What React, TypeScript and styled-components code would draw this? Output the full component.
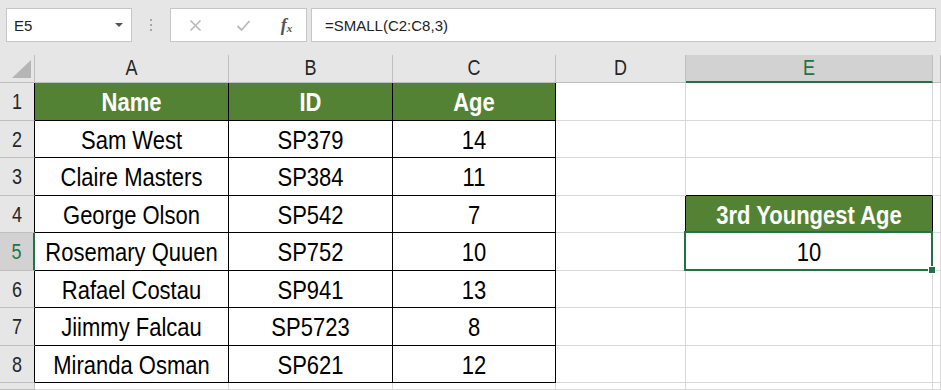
import React from "react";
import styled, { createGlobalStyle } from "styled-components";

const GRID = "#d9d9d9";
const HEAD_LINE = "#bfbfbf";
const HEAD_BG = "#e6e6e6";
const HEAD_SEL = "#d2d2d2";
const XL_GREEN = "#217346";
const FILL_GREEN = "#548235";
const INK = "#000";

const GlobalStyle = createGlobalStyle`
  html, body {
    margin: 0;
    padding: 0;
    background: #fff;
  }
  body {
    font-family: "Liberation Sans", Arial, sans-serif;
  }
`;

const Page = styled.div`
  width: 941px;
  height: 390px;
  overflow: hidden;
  display: flex;
  flex-direction: column;
`;

const Toolbar = styled.div`
  flex: 0 0 55px;
  display: flex;
  align-items: flex-start;
  padding: 8px 5px 0 6px;
  box-sizing: border-box;
  background: ${HEAD_BG};
`;

const Box = styled.div`
  height: 34px;
  box-sizing: border-box;
  background: #fff;
  border: 1px solid #c6c6c6;
  display: flex;
  align-items: center;
`;

const NameBox = styled(Box)`
  width: 126px;
  padding: 0 8px 0 7px;
  justify-content: space-between;
  font-size: 15px;
  color: #222;
`;

const DropArrow = styled.span`
  width: 0;
  height: 0;
  border-left: 4px solid transparent;
  border-right: 4px solid transparent;
  border-top: 4px solid #555;
`;

const Grip = styled.div`
  width: 38px;
  height: 34px;
  display: flex;
  flex-direction: column;
  align-items: center;
  justify-content: center;
  gap: 3px;
`;

const Dot = styled.span`
  width: 2px;
  height: 2px;
  background: #a6a6a6;
`;

const FxGroup = styled(Box)`
  width: 137px;
  margin-right: 4px;
  display: grid;
  grid-template-columns: 48px 48px 39px;
  justify-items: center;
`;

const FxLabel = styled.span`
  font-family: "Liberation Serif", "Times New Roman", serif;
  font-style: italic;
  font-weight: bold;
  font-size: 18px;
  color: #555;
  sub {
    font-size: 11px;
    vertical-align: -1px;
  }
`;

const FormulaBox = styled(Box)`
  flex: 1;
  padding-left: 13px;
  font-size: 15px;
  color: #222;
`;

const Sheet = styled.div`
  flex: 1;
  display: grid;
  grid-template-columns: 35px 194px 164px 163px 130px 247px 1fr;
  grid-template-rows: 28px 38px 37px 38px 37px 38px 37px 38px 37px 1fr;
  background: #fff;
`;

const Stretch = styled.span`
  display: inline-block;
  transform: scaleY(1.2);
`;

const Corner = styled.div`
  background: ${HEAD_BG};
  border-right: 1px solid ${HEAD_LINE};
  border-bottom: 1px solid ${HEAD_LINE};
  display: flex;
  align-items: flex-end;
  justify-content: flex-end;
  padding: 0 3px 4px 0;
  box-sizing: border-box;
`;

const CornerMark = styled.span`
  width: 19px;
  height: 18px;
  background: #b5b5b5;
  clip-path: polygon(100% 0, 100% 100%, 0 100%);
`;

const ColHead = styled.div<{ $sel?: boolean }>`
  display: flex;
  align-items: center;
  justify-content: center;
  box-sizing: border-box;
  background: ${(p) => (p.$sel ? HEAD_SEL : HEAD_BG)};
  border-right: 1px solid ${HEAD_LINE};
  border-bottom: ${(p) => (p.$sel ? `2px solid ${XL_GREEN}` : `1px solid ${HEAD_LINE}`)};
  color: ${(p) => (p.$sel ? XL_GREEN : "#262626")};
  font-size: 18px;
`;

const RowHead = styled.div<{ $sel?: boolean; $edge?: string }>`
  display: flex;
  align-items: center;
  justify-content: center;
  box-sizing: border-box;
  padding-top: 2px;
  background: ${(p) => (p.$sel ? HEAD_SEL : HEAD_BG)};
  border-bottom: 1px solid ${HEAD_LINE};
  border-right: ${(p) =>
    p.$sel ? `2px solid ${XL_GREEN}` : `1px solid ${p.$edge ?? HEAD_LINE}`};
  color: ${(p) => (p.$sel ? XL_GREEN : "#262626")};
  font-size: 18px;
`;

const Cell = styled.div<{ $fill?: string; $r?: string; $b?: string; $head?: boolean }>`
  position: relative;
  display: flex;
  align-items: center;
  justify-content: center;
  box-sizing: border-box;
  padding-top: 3px;
  white-space: nowrap;
  background: ${(p) => p.$fill ?? "#fff"};
  border-right: 1px solid ${(p) => p.$r ?? GRID};
  border-bottom: 1px solid ${(p) => p.$b ?? GRID};
  color: ${(p) => (p.$head ? "#fff" : INK)};
  font-weight: ${(p) => (p.$head ? "bold" : "normal")};
  font-size: 22px;
`;

const Selection = styled.div`
  position: absolute;
  top: -2px;
  left: -2px;
  right: -1px;
  bottom: -1px;
  border: 2px solid ${XL_GREEN};
  pointer-events: none;
  z-index: 2;
`;

const FillHandle = styled.span`
  position: absolute;
  right: -5px;
  bottom: -5px;
  width: 6px;
  height: 6px;
  background: ${XL_GREEN};
  border: 1px solid #fff;
`;

const COLS = ["A", "B", "C", "D", "E", ""];

const PEOPLE: [string, string, string][] = [
  ["Sam West", "SP379", "14"],
  ["Claire Masters", "SP384", "11"],
  ["George Olson", "SP542", "7"],
  ["Rosemary Quuen", "SP752", "10"],
  ["Rafael Costau", "SP941", "13"],
  ["Jiimmy Falcau", "SP5723", "8"],
  ["Miranda Osman", "SP621", "12"],
];

const CrossIcon = () => (
  <svg width="13" height="13" viewBox="0 0 13 13">
    <path d="M1.5 1.5 L11.5 11.5 M11.5 1.5 L1.5 11.5" stroke="#b9b9b9" strokeWidth="1.6" fill="none" />
  </svg>
);

const CheckIcon = () => (
  <svg width="15" height="13" viewBox="0 0 15 13">
    <path d="M1.5 7 L5.5 11 L13.5 2" stroke="#b9b9b9" strokeWidth="1.8" fill="none" />
  </svg>
);

export default function App() {
  const tableRows: string[][] = [["Name", "ID", "Age"], ...PEOPLE];

  const renderRow = (rowNo: number) => {
    const inTable = rowNo >= 1 && rowNo <= 8;
    const data = inTable ? tableRows[rowNo - 1] : null;
    const isHead = rowNo === 1;
    const cells: React.ReactNode[] = [];

    cells.push(
      <RowHead key="h" $sel={rowNo === 5} $edge={inTable ? INK : undefined}>
        {rowNo <= 8 ? <Stretch>{rowNo}</Stretch> : null}
      </RowHead>,
    );

    for (let c = 0; c < 3; c++) {
      cells.push(
        <Cell
          key={c}
          $fill={isHead ? FILL_GREEN : undefined}
          $r={inTable ? INK : undefined}
          $b={inTable ? INK : undefined}
          $head={isHead}
        >
          {data ? <Stretch>{data[c]}</Stretch> : null}
        </Cell>,
      );
    }

    // column D
    cells.push(<Cell key="d" $r={rowNo === 4 ? INK : undefined} />);

    // column E
    if (rowNo === 4) {
      cells.push(
        <Cell key="e" $fill={FILL_GREEN} $r={INK} $b={INK} $head>
          <Stretch>3rd Youngest Age</Stretch>
        </Cell>,
      );
    } else if (rowNo === 5) {
      cells.push(
        <Cell key="e">
          <Stretch>10</Stretch>
          <Selection>
            <FillHandle />
          </Selection>
        </Cell>,
      );
    } else {
      cells.push(<Cell key="e" $b={rowNo === 3 ? INK : undefined} />);
    }

    cells.push(<Cell key="f" />);
    return cells;
  };

  return (
    <>
      <GlobalStyle />
      <Page>
        <Toolbar>
          <NameBox>
            <span>E5</span>
            <DropArrow />
          </NameBox>
          <Grip>
            <Dot />
            <Dot />
            <Dot />
          </Grip>
          <FxGroup>
            <CrossIcon />
            <CheckIcon />
            <FxLabel>
              f<sub>x</sub>
            </FxLabel>
          </FxGroup>
          <FormulaBox>=SMALL(C2:C8,3)</FormulaBox>
        </Toolbar>
        <Sheet>
          <Corner>
            <CornerMark />
          </Corner>
          {COLS.map((col) => (
            <ColHead key={col || "f"} $sel={col === "E"}>
              <Stretch>{col}</Stretch>
            </ColHead>
          ))}
          {[1, 2, 3, 4, 5, 6, 7, 8, 9].map((r) => (
            <React.Fragment key={r}>{renderRow(r)}</React.Fragment>
          ))}
        </Sheet>
      </Page>
    </>
  );
}
